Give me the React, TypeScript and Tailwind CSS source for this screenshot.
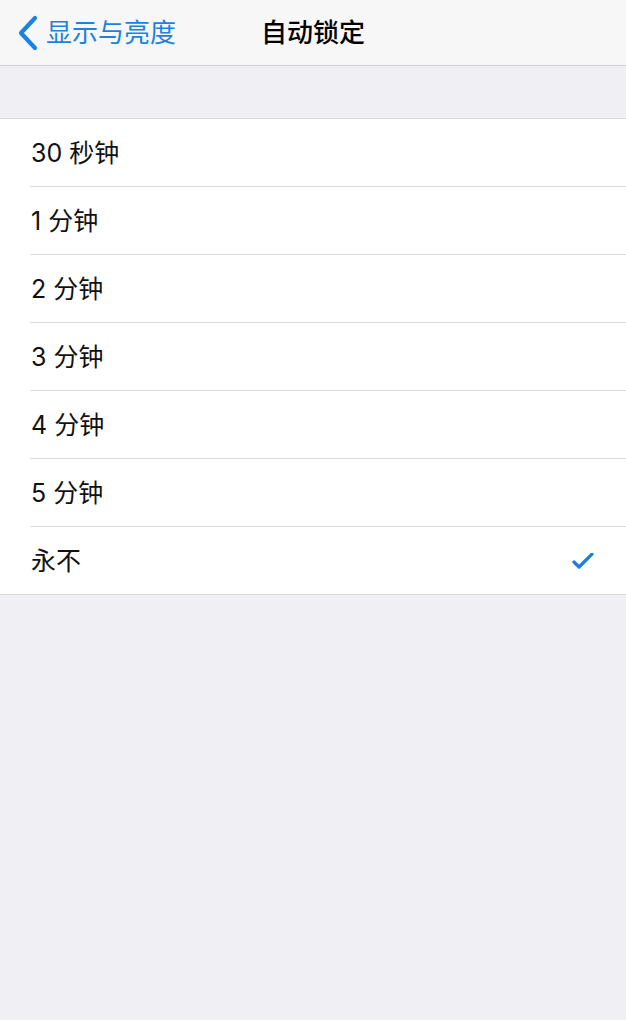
import React from 'react';

const options = ['30 秒钟', '1 分钟', '2 分钟', '3 分钟', '4 分钟', '5 分钟', '永不'];

const font = { fontFamily: 'Inter, "Noto Sans CJK SC", sans-serif' };

const App: React.FC = () => {
  const selected = '永不';

  return (
    <div className="min-h-[1020px] w-[626px] bg-[#efeff4]" style={font}>
      <div className="relative flex h-[66px] items-center border-b border-[#cfcfd3] bg-[#f7f7f8]">
        <div className="flex items-center pl-[16px] text-[#1a82e2]">
          <svg width="24" height="36" viewBox="0 0 24 36" className="mr-[6px]">
            <polyline points="19,3 5,18 19,33" fill="none" stroke="currentColor" strokeWidth="4.2" strokeLinecap="round" strokeLinejoin="round" />
          </svg>
          <span className="text-[26px] leading-none">显示与亮度</span>
        </div>
        <div className="absolute left-1/2 -translate-x-1/2 text-[26px] font-medium leading-none text-black">
          自动锁定
        </div>
      </div>

      <div className="h-[52px]" />

      <div className="border-y border-[#d8d8dc] bg-white">
        {options.map((label, i) => {
          const last = i === options.length - 1;
          return (
            <div key={label} className="pl-[30px]">
              <div
                className={`flex items-center justify-between pr-[32px] pt-[2px] ${
                  last ? 'h-[67px]' : 'h-[68px] border-b border-[#dcdce0]'
                }`}
              >
                <span className="pl-[1px] text-[25px] leading-none text-[#111]">{label}</span>
                {label === selected && (
                  <svg width="22" height="18" viewBox="0 0 22 18">
                    <polyline points="2,9 7,14 20,1" fill="none" stroke="#1a7fe0" strokeWidth="3.2" strokeLinecap="round" strokeLinejoin="round" />
                  </svg>
                )}
              </div>
            </div>
          );
        })}
      </div>
    </div>
  );
};

export default App;
